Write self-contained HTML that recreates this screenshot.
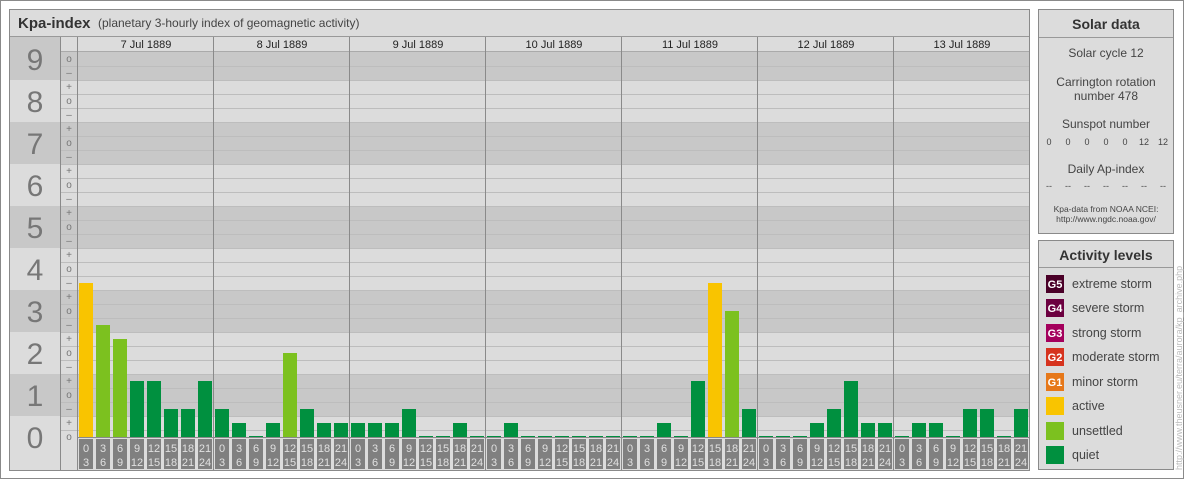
<!DOCTYPE html>
<html><head><meta charset="utf-8"><style>
html,body{margin:0;padding:0;background:#fff;}
svg{display:block;font-family:"Liberation Sans",sans-serif;}
</style></head><body>
<svg width="1184" height="480" viewBox="0 0 1184 480" xmlns="http://www.w3.org/2000/svg">
<rect x="0.5" y="0.5" width="1183" height="478" fill="#fff" stroke="#8a8a8a"/>
<!-- main panel -->
<rect x="9.5" y="9.5" width="1020" height="461" fill="#dcdcdc" stroke="#8a8a8a"/>
<line x1="10" y1="36.5" x2="1029" y2="36.5" stroke="#999"/>
<text x="18" y="28" font-size="15" font-weight="bold" fill="#333">Kpa-index</text>
<text x="98" y="27" font-size="12" fill="#444">(planetary 3-hourly index of geomagnetic activity)</text>
<!-- bands -->
<g fill="#c8c8c8">
<rect x="10" y="37" width="50" height="43"/><rect x="78" y="52" width="951" height="28"/><rect x="60" y="52" width="18" height="28"/>
<rect x="10" y="122" width="1019" height="42"/>
<rect x="10" y="206" width="1019" height="42"/>
<rect x="10" y="290" width="1019" height="42"/>
<rect x="10" y="374" width="1019" height="42"/>
</g>
<rect x="60" y="37" width="969" height="15" fill="#dcdcdc"/>
<line x1="60" y1="51.5" x2="1029" y2="51.5" stroke="#aaa"/>
<g stroke="#bdbdbd">
<line x1="60" y1="66.5" x2="1029" y2="66.5"/><line x1="60" y1="80.5" x2="1029" y2="80.5"/><line x1="60" y1="94.5" x2="1029" y2="94.5"/><line x1="60" y1="108.5" x2="1029" y2="108.5"/><line x1="60" y1="122.5" x2="1029" y2="122.5"/><line x1="60" y1="136.5" x2="1029" y2="136.5"/><line x1="60" y1="150.5" x2="1029" y2="150.5"/><line x1="60" y1="164.5" x2="1029" y2="164.5"/><line x1="60" y1="178.5" x2="1029" y2="178.5"/><line x1="60" y1="192.5" x2="1029" y2="192.5"/><line x1="60" y1="206.5" x2="1029" y2="206.5"/><line x1="60" y1="220.5" x2="1029" y2="220.5"/><line x1="60" y1="234.5" x2="1029" y2="234.5"/><line x1="60" y1="248.5" x2="1029" y2="248.5"/><line x1="60" y1="262.5" x2="1029" y2="262.5"/><line x1="60" y1="276.5" x2="1029" y2="276.5"/><line x1="60" y1="290.5" x2="1029" y2="290.5"/><line x1="60" y1="304.5" x2="1029" y2="304.5"/><line x1="60" y1="318.5" x2="1029" y2="318.5"/><line x1="60" y1="332.5" x2="1029" y2="332.5"/><line x1="60" y1="346.5" x2="1029" y2="346.5"/><line x1="60" y1="360.5" x2="1029" y2="360.5"/><line x1="60" y1="374.5" x2="1029" y2="374.5"/><line x1="60" y1="388.5" x2="1029" y2="388.5"/><line x1="60" y1="402.5" x2="1029" y2="402.5"/><line x1="60" y1="416.5" x2="1029" y2="416.5"/><line x1="60" y1="430.5" x2="1029" y2="430.5"/>
</g>
<line x1="60.5" y1="37" x2="60.5" y2="470" stroke="#8a8a8a"/>
<line x1="77.5" y1="37" x2="77.5" y2="470" stroke="#8a8a8a"/>
<!-- big numbers -->
<g font-size="30" fill="#777" text-anchor="middle">
<text x="35" y="70">9</text><text x="35" y="112">8</text><text x="35" y="154">7</text><text x="35" y="196">6</text><text x="35" y="238">5</text><text x="35" y="280">4</text><text x="35" y="322">3</text><text x="35" y="364">2</text><text x="35" y="406">1</text><text x="35" y="448">0</text>
</g>
<!-- ticks -->
<g font-size="10" fill="#777" text-anchor="middle">
<text x="69" y="62">o</text><text x="69" y="76">–</text>
<text x="69" y="90">+</text><text x="69" y="104">o</text><text x="69" y="118">–</text>
<text x="69" y="132">+</text><text x="69" y="146">o</text><text x="69" y="160">–</text>
<text x="69" y="174">+</text><text x="69" y="188">o</text><text x="69" y="202">–</text>
<text x="69" y="216">+</text><text x="69" y="230">o</text><text x="69" y="244">–</text>
<text x="69" y="258">+</text><text x="69" y="272">o</text><text x="69" y="286">–</text>
<text x="69" y="300">+</text><text x="69" y="314">o</text><text x="69" y="328">–</text>
<text x="69" y="342">+</text><text x="69" y="356">o</text><text x="69" y="370">–</text>
<text x="69" y="384">+</text><text x="69" y="398">o</text><text x="69" y="412">–</text>
<text x="69" y="426">+</text><text x="69" y="440">o</text>
</g>
<!-- day headers -->
<g font-size="11" fill="#222" text-anchor="middle">
<text x="146" y="48">7 Jul 1889</text><text x="282" y="48">8 Jul 1889</text><text x="418" y="48">9 Jul 1889</text><text x="554" y="48">10 Jul 1889</text><text x="690" y="48">11 Jul 1889</text><text x="826" y="48">12 Jul 1889</text><text x="962" y="48">13 Jul 1889</text>
</g>
<g stroke="#8a8a8a">
<line x1="213.5" y1="37" x2="213.5" y2="470"/><line x1="349.5" y1="37" x2="349.5" y2="470"/><line x1="485.5" y1="37" x2="485.5" y2="470"/><line x1="621.5" y1="37" x2="621.5" y2="470"/><line x1="757.5" y1="37" x2="757.5" y2="470"/><line x1="893.5" y1="37" x2="893.5" y2="470"/>
</g>
<line x1="78" y1="437.5" x2="1029" y2="437.5" stroke="#8a8a8a"/>
<!-- bars -->
<g>
<rect x="79" y="283" width="14" height="154" fill="#f9c400"/>
<rect x="96" y="325" width="14" height="112" fill="#7cc11f"/>
<rect x="113" y="339" width="14" height="98" fill="#7cc11f"/>
<rect x="130" y="381" width="14" height="56" fill="#00903f"/>
<rect x="147" y="381" width="14" height="56" fill="#00903f"/>
<rect x="164" y="409" width="14" height="28" fill="#00903f"/>
<rect x="181" y="409" width="14" height="28" fill="#00903f"/>
<rect x="198" y="381" width="14" height="56" fill="#00903f"/>
<rect x="215" y="409" width="14" height="28" fill="#00903f"/>
<rect x="232" y="423" width="14" height="14" fill="#00903f"/>
<rect x="249" y="436" width="14" height="1" fill="#00903f"/>
<rect x="266" y="423" width="14" height="14" fill="#00903f"/>
<rect x="283" y="353" width="14" height="84" fill="#7cc11f"/>
<rect x="300" y="409" width="14" height="28" fill="#00903f"/>
<rect x="317" y="423" width="14" height="14" fill="#00903f"/>
<rect x="334" y="423" width="14" height="14" fill="#00903f"/>
<rect x="351" y="423" width="14" height="14" fill="#00903f"/>
<rect x="368" y="423" width="14" height="14" fill="#00903f"/>
<rect x="385" y="423" width="14" height="14" fill="#00903f"/>
<rect x="402" y="409" width="14" height="28" fill="#00903f"/>
<rect x="419" y="436" width="14" height="1" fill="#00903f"/>
<rect x="436" y="436" width="14" height="1" fill="#00903f"/>
<rect x="453" y="423" width="14" height="14" fill="#00903f"/>
<rect x="470" y="436" width="14" height="1" fill="#00903f"/>
<rect x="487" y="436" width="14" height="1" fill="#00903f"/>
<rect x="504" y="423" width="14" height="14" fill="#00903f"/>
<rect x="521" y="436" width="14" height="1" fill="#00903f"/>
<rect x="538" y="436" width="14" height="1" fill="#00903f"/>
<rect x="555" y="436" width="14" height="1" fill="#00903f"/>
<rect x="572" y="436" width="14" height="1" fill="#00903f"/>
<rect x="589" y="436" width="14" height="1" fill="#00903f"/>
<rect x="606" y="436" width="14" height="1" fill="#00903f"/>
<rect x="623" y="436" width="14" height="1" fill="#00903f"/>
<rect x="640" y="436" width="14" height="1" fill="#00903f"/>
<rect x="657" y="423" width="14" height="14" fill="#00903f"/>
<rect x="674" y="436" width="14" height="1" fill="#00903f"/>
<rect x="691" y="381" width="14" height="56" fill="#00903f"/>
<rect x="708" y="283" width="14" height="154" fill="#f9c400"/>
<rect x="725" y="311" width="14" height="126" fill="#7cc11f"/>
<rect x="742" y="409" width="14" height="28" fill="#00903f"/>
<rect x="759" y="436" width="14" height="1" fill="#00903f"/>
<rect x="776" y="436" width="14" height="1" fill="#00903f"/>
<rect x="793" y="436" width="14" height="1" fill="#00903f"/>
<rect x="810" y="423" width="14" height="14" fill="#00903f"/>
<rect x="827" y="409" width="14" height="28" fill="#00903f"/>
<rect x="844" y="381" width="14" height="56" fill="#00903f"/>
<rect x="861" y="423" width="14" height="14" fill="#00903f"/>
<rect x="878" y="423" width="14" height="14" fill="#00903f"/>
<rect x="895" y="436" width="14" height="1" fill="#00903f"/>
<rect x="912" y="423" width="14" height="14" fill="#00903f"/>
<rect x="929" y="423" width="14" height="14" fill="#00903f"/>
<rect x="946" y="436" width="14" height="1" fill="#00903f"/>
<rect x="963" y="409" width="14" height="28" fill="#00903f"/>
<rect x="980" y="409" width="14" height="28" fill="#00903f"/>
<rect x="997" y="436" width="14" height="1" fill="#00903f"/>
<rect x="1014" y="409" width="14" height="28" fill="#00903f"/>
</g>
<!-- hour labels -->
<g id="d0">
<g fill="#808080"><rect x="79" y="439" width="14" height="30"/><rect x="96" y="439" width="14" height="30"/><rect x="113" y="439" width="14" height="30"/><rect x="130" y="439" width="14" height="30"/><rect x="147" y="439" width="14" height="30"/><rect x="164" y="439" width="14" height="30"/><rect x="181" y="439" width="14" height="30"/><rect x="198" y="439" width="14" height="30"/></g>
</g>
<g transform="translate(136,0)"><g fill="#808080"><rect x="79" y="439" width="14" height="30"/><rect x="96" y="439" width="14" height="30"/><rect x="113" y="439" width="14" height="30"/><rect x="130" y="439" width="14" height="30"/><rect x="147" y="439" width="14" height="30"/><rect x="164" y="439" width="14" height="30"/><rect x="181" y="439" width="14" height="30"/><rect x="198" y="439" width="14" height="30"/></g></g>
<g transform="translate(272,0)"><g fill="#808080"><rect x="79" y="439" width="14" height="30"/><rect x="96" y="439" width="14" height="30"/><rect x="113" y="439" width="14" height="30"/><rect x="130" y="439" width="14" height="30"/><rect x="147" y="439" width="14" height="30"/><rect x="164" y="439" width="14" height="30"/><rect x="181" y="439" width="14" height="30"/><rect x="198" y="439" width="14" height="30"/></g></g>
<g transform="translate(408,0)"><g fill="#808080"><rect x="79" y="439" width="14" height="30"/><rect x="96" y="439" width="14" height="30"/><rect x="113" y="439" width="14" height="30"/><rect x="130" y="439" width="14" height="30"/><rect x="147" y="439" width="14" height="30"/><rect x="164" y="439" width="14" height="30"/><rect x="181" y="439" width="14" height="30"/><rect x="198" y="439" width="14" height="30"/></g></g>
<g transform="translate(544,0)"><g fill="#808080"><rect x="79" y="439" width="14" height="30"/><rect x="96" y="439" width="14" height="30"/><rect x="113" y="439" width="14" height="30"/><rect x="130" y="439" width="14" height="30"/><rect x="147" y="439" width="14" height="30"/><rect x="164" y="439" width="14" height="30"/><rect x="181" y="439" width="14" height="30"/><rect x="198" y="439" width="14" height="30"/></g></g>
<g transform="translate(680,0)"><g fill="#808080"><rect x="79" y="439" width="14" height="30"/><rect x="96" y="439" width="14" height="30"/><rect x="113" y="439" width="14" height="30"/><rect x="130" y="439" width="14" height="30"/><rect x="147" y="439" width="14" height="30"/><rect x="164" y="439" width="14" height="30"/><rect x="181" y="439" width="14" height="30"/><rect x="198" y="439" width="14" height="30"/></g></g>
<g transform="translate(816,0)"><g fill="#808080"><rect x="79" y="439" width="14" height="30"/><rect x="96" y="439" width="14" height="30"/><rect x="113" y="439" width="14" height="30"/><rect x="130" y="439" width="14" height="30"/><rect x="147" y="439" width="14" height="30"/><rect x="164" y="439" width="14" height="30"/><rect x="181" y="439" width="14" height="30"/><rect x="198" y="439" width="14" height="30"/></g></g>
<g font-size="11" fill="#e0e0e0" text-anchor="middle">
<g><text x="86" y="452">0</text><text x="86" y="466">3</text><text x="103" y="452">3</text><text x="103" y="466">6</text><text x="120" y="452">6</text><text x="120" y="466">9</text><text x="137" y="452">9</text><text x="137" y="466">12</text><text x="154" y="452">12</text><text x="154" y="466">15</text><text x="171" y="452">15</text><text x="171" y="466">18</text><text x="188" y="452">18</text><text x="188" y="466">21</text><text x="205" y="452">21</text><text x="205" y="466">24</text></g>
<g transform="translate(136,0)"><text x="86" y="452">0</text><text x="86" y="466">3</text><text x="103" y="452">3</text><text x="103" y="466">6</text><text x="120" y="452">6</text><text x="120" y="466">9</text><text x="137" y="452">9</text><text x="137" y="466">12</text><text x="154" y="452">12</text><text x="154" y="466">15</text><text x="171" y="452">15</text><text x="171" y="466">18</text><text x="188" y="452">18</text><text x="188" y="466">21</text><text x="205" y="452">21</text><text x="205" y="466">24</text></g>
<g transform="translate(272,0)"><text x="86" y="452">0</text><text x="86" y="466">3</text><text x="103" y="452">3</text><text x="103" y="466">6</text><text x="120" y="452">6</text><text x="120" y="466">9</text><text x="137" y="452">9</text><text x="137" y="466">12</text><text x="154" y="452">12</text><text x="154" y="466">15</text><text x="171" y="452">15</text><text x="171" y="466">18</text><text x="188" y="452">18</text><text x="188" y="466">21</text><text x="205" y="452">21</text><text x="205" y="466">24</text></g>
<g transform="translate(408,0)"><text x="86" y="452">0</text><text x="86" y="466">3</text><text x="103" y="452">3</text><text x="103" y="466">6</text><text x="120" y="452">6</text><text x="120" y="466">9</text><text x="137" y="452">9</text><text x="137" y="466">12</text><text x="154" y="452">12</text><text x="154" y="466">15</text><text x="171" y="452">15</text><text x="171" y="466">18</text><text x="188" y="452">18</text><text x="188" y="466">21</text><text x="205" y="452">21</text><text x="205" y="466">24</text></g>
<g transform="translate(544,0)"><text x="86" y="452">0</text><text x="86" y="466">3</text><text x="103" y="452">3</text><text x="103" y="466">6</text><text x="120" y="452">6</text><text x="120" y="466">9</text><text x="137" y="452">9</text><text x="137" y="466">12</text><text x="154" y="452">12</text><text x="154" y="466">15</text><text x="171" y="452">15</text><text x="171" y="466">18</text><text x="188" y="452">18</text><text x="188" y="466">21</text><text x="205" y="452">21</text><text x="205" y="466">24</text></g>
<g transform="translate(680,0)"><text x="86" y="452">0</text><text x="86" y="466">3</text><text x="103" y="452">3</text><text x="103" y="466">6</text><text x="120" y="452">6</text><text x="120" y="466">9</text><text x="137" y="452">9</text><text x="137" y="466">12</text><text x="154" y="452">12</text><text x="154" y="466">15</text><text x="171" y="452">15</text><text x="171" y="466">18</text><text x="188" y="452">18</text><text x="188" y="466">21</text><text x="205" y="452">21</text><text x="205" y="466">24</text></g>
<g transform="translate(816,0)"><text x="86" y="452">0</text><text x="86" y="466">3</text><text x="103" y="452">3</text><text x="103" y="466">6</text><text x="120" y="452">6</text><text x="120" y="466">9</text><text x="137" y="452">9</text><text x="137" y="466">12</text><text x="154" y="452">12</text><text x="154" y="466">15</text><text x="171" y="452">15</text><text x="171" y="466">18</text><text x="188" y="452">18</text><text x="188" y="466">21</text><text x="205" y="452">21</text><text x="205" y="466">24</text></g>
</g>
<!-- Solar data -->
<rect x="1038.5" y="9.5" width="135" height="224" fill="#dcdcdc" stroke="#8a8a8a"/>
<line x1="1039" y1="37.5" x2="1173" y2="37.5" stroke="#999"/>
<g text-anchor="middle" fill="#444">
<text x="1106" y="29" font-size="14" font-weight="bold" fill="#333">Solar data</text>
<text x="1106" y="57" font-size="12">Solar cycle 12</text>
<text x="1106" y="86" font-size="12">Carrington rotation</text>
<text x="1106" y="100" font-size="12">number 478</text>
<text x="1106" y="128" font-size="12">Sunspot number</text>
<text x="1106" y="173" font-size="12">Daily Ap-index</text>
<text x="1106" y="212" font-size="8.5">Kpa-data from NOAA NCEI:</text>
<text x="1106" y="222" font-size="8.5">http://www.ngdc.noaa.gov/</text>
</g>
<g font-size="9" fill="#444" text-anchor="middle">
<text x="1049" y="145">0</text><text x="1068" y="145">0</text><text x="1087" y="145">0</text><text x="1106" y="145">0</text><text x="1125" y="145">0</text><text x="1144" y="145">12</text><text x="1163" y="145">12</text>
<text x="1049" y="189">--</text><text x="1068" y="189">--</text><text x="1087" y="189">--</text><text x="1106" y="189">--</text><text x="1125" y="189">--</text><text x="1144" y="189">--</text><text x="1163" y="189">--</text>
</g>
<!-- Activity levels -->
<rect x="1038.5" y="240.5" width="135" height="229" fill="#dcdcdc" stroke="#8a8a8a"/>
<line x1="1039" y1="267.5" x2="1173" y2="267.5" stroke="#999"/>
<text x="1106" y="260" font-size="14" font-weight="bold" fill="#333" text-anchor="middle">Activity levels</text>
<rect x="1046" y="275" width="18" height="18" fill="#4a0028"/>
<rect x="1046" y="299" width="18" height="18" fill="#6c0040"/>
<rect x="1046" y="324" width="18" height="18" fill="#a4005c"/>
<rect x="1046" y="348" width="18" height="18" fill="#d6331e"/>
<rect x="1046" y="373" width="18" height="18" fill="#e6781a"/>
<rect x="1046" y="397" width="18" height="18" fill="#f9c400"/>
<rect x="1046" y="422" width="18" height="18" fill="#7cc11f"/>
<rect x="1046" y="446" width="18" height="18" fill="#00903f"/>
<g font-size="11" font-weight="bold" fill="#fff" text-anchor="middle">
<text x="1055" y="288">G5</text><text x="1055" y="312">G4</text><text x="1055" y="337">G3</text><text x="1055" y="361">G2</text><text x="1055" y="386">G1</text>
</g>
<g font-size="12.5" fill="#444">
<text x="1072" y="288">extreme storm</text><text x="1072" y="312">severe storm</text><text x="1072" y="337">strong storm</text><text x="1072" y="361">moderate storm</text><text x="1072" y="386">minor storm</text><text x="1072" y="410">active</text><text x="1072" y="435">unsettled</text><text x="1072" y="459">quiet</text>
</g>
<text transform="translate(1182,470) rotate(-90)" font-size="9" fill="#bbb">http://www.theusner.eu/terra/aurora/kp_archive.php</text>
</svg>
</body></html>
